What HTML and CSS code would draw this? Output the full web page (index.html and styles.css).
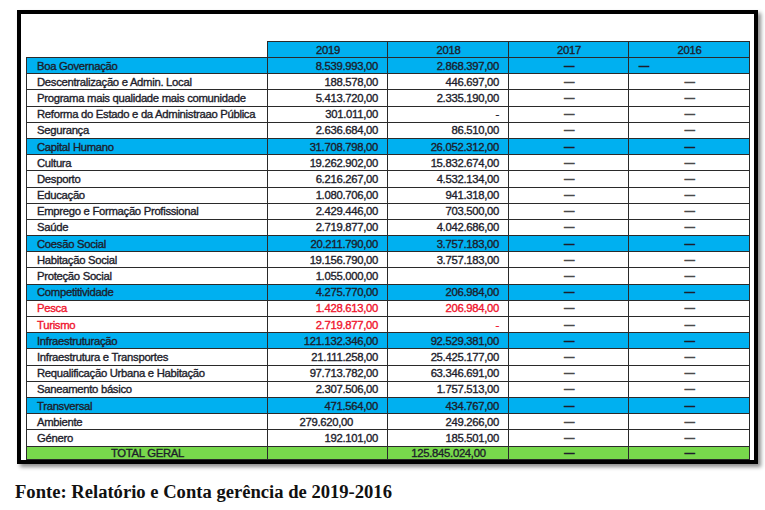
FILE: index.html
```html
<!DOCTYPE html>
<html lang="pt">
<head>
<meta charset="utf-8">
<title>Orçamento por pilar</title>
<link rel="stylesheet" href="styles.css">
</head>
<body>
<div class="frame">
  <table class="budget">
    <colgroup>
      <col class="c-label"><col class="c-num"><col class="c-num2"><col class="c-num"><col class="c-num2">
    </colgroup>
    <thead>
      <tr class="head">
        <th class="blank"></th><th>2019</th><th>2018</th><th>2017</th><th>2016</th>
      </tr>
    </thead>
    <tbody>
      <tr class="grp"><td>Boa Governação</td><td class="n">8.539.993,00</td><td class="n">2.868.397,00</td><td class="d">—</td><td class="d left">—</td></tr>
      <tr><td>Descentralização e Admin. Local</td><td class="n">188.578,00</td><td class="n">446.697,00</td><td class="d">—</td><td class="d">—</td></tr>
      <tr><td>Programa mais qualidade mais comunidade</td><td class="n">5.413.720,00</td><td class="n">2.335.190,00</td><td class="d">—</td><td class="d">—</td></tr>
      <tr><td>Reforma do Estado e da Administraao Pública</td><td class="n">301.011,00</td><td class="n">-</td><td class="d">—</td><td class="d">—</td></tr>
      <tr><td>Segurança</td><td class="n">2.636.684,00</td><td class="n">86.510,00</td><td class="d">—</td><td class="d">—</td></tr>
      <tr class="grp"><td>Capital Humano</td><td class="n">31.708.798,00</td><td class="n">26.052.312,00</td><td class="d">—</td><td class="d">—</td></tr>
      <tr><td>Cultura</td><td class="n">19.262.902,00</td><td class="n">15.832.674,00</td><td class="d">—</td><td class="d">—</td></tr>
      <tr><td>Desporto</td><td class="n">6.216.267,00</td><td class="n">4.532.134,00</td><td class="d">—</td><td class="d">—</td></tr>
      <tr><td>Educação</td><td class="n">1.080.706,00</td><td class="n">941.318,00</td><td class="d">—</td><td class="d">—</td></tr>
      <tr><td>Emprego e Formação Profissional</td><td class="n">2.429.446,00</td><td class="n">703.500,00</td><td class="d">—</td><td class="d">—</td></tr>
      <tr><td>Saúde</td><td class="n">2.719.877,00</td><td class="n">4.042.686,00</td><td class="d">—</td><td class="d">—</td></tr>
      <tr class="grp"><td>Coesão Social</td><td class="n">20.211.790,00</td><td class="n">3.757.183,00</td><td class="d">—</td><td class="d">—</td></tr>
      <tr><td>Habitação Social</td><td class="n">19.156.790,00</td><td class="n">3.757.183,00</td><td class="d">—</td><td class="d">—</td></tr>
      <tr><td>Proteção Social</td><td class="n">1.055.000,00</td><td class="n"></td><td class="d">—</td><td class="d">—</td></tr>
      <tr class="grp"><td>Competitividade</td><td class="n">4.275.770,00</td><td class="n">206.984,00</td><td class="d">—</td><td class="d">—</td></tr>
      <tr class="red"><td>Pesca</td><td class="n">1.428.613,00</td><td class="n">206.984,00</td><td class="d">—</td><td class="d">—</td></tr>
      <tr class="red"><td>Turismo</td><td class="n">2.719.877,00</td><td class="n">-</td><td class="d">—</td><td class="d">—</td></tr>
      <tr class="grp"><td>Infraestruturação</td><td class="n">121.132.346,00</td><td class="n">92.529.381,00</td><td class="d">—</td><td class="d">—</td></tr>
      <tr><td>Infraestrutura e Transportes</td><td class="n">21.111.258,00</td><td class="n">25.425.177,00</td><td class="d">—</td><td class="d">—</td></tr>
      <tr><td>Requalificação Urbana e Habitação</td><td class="n">97.713.782,00</td><td class="n">63.346.691,00</td><td class="d">—</td><td class="d">—</td></tr>
      <tr><td>Saneamento básico</td><td class="n">2.307.506,00</td><td class="n">1.757.513,00</td><td class="d">—</td><td class="d">—</td></tr>
      <tr class="grp"><td>Transversal</td><td class="n">471.564,00</td><td class="n">434.767,00</td><td class="d">—</td><td class="d">—</td></tr>
      <tr><td>Ambiente</td><td class="n offset">279.620,00</td><td class="n">249.266,00</td><td class="d">—</td><td class="d">—</td></tr>
      <tr><td>Género</td><td class="n">192.101,00</td><td class="n">185.501,00</td><td class="d">—</td><td class="d">—</td></tr>
      <tr class="total"><td class="c">TOTAL GERAL</td><td></td><td class="c">125.845.024,00</td><td class="d">—</td><td class="d">—</td></tr>
    </tbody>
  </table>
</div>
<p class="source">Fonte: Relatório e Conta gerência de 2019-2016</p>
</body>
</html>
```
FILE: styles.css
```css
html, body {
  margin: 0;
  padding: 0;
  background: #ffffff;
}

.frame {
  margin: 10px 0 0 17px;
  width: 728px;
  border: 4px solid #000;
  padding: 27px 0 0 5px;
  box-shadow: 3px 3px 4px rgba(0, 0, 0, 0.45);
  background: #fff;
}

.budget {
  border-collapse: collapse;
  table-layout: fixed;
  width: 723px;
  font-family: "Liberation Sans", Arial, sans-serif;
  font-size: 11.3px;
  letter-spacing: -0.3px;
  -webkit-text-stroke: 0.35px currentColor;
  color: #1d1d2b;
}

.c-label { width: 241px; }
.c-num { width: 120px; }
.c-num2 { width: 121px; }

.budget th,
.budget td {
  border: 1px solid #2a2a2a;
  height: 16.2px;
  padding: 0 9px 0 10px;
  line-height: 14px;
  white-space: nowrap;
  overflow: hidden;
  box-sizing: border-box;
}

.budget tr.head th {
  background: #00b0f0;
  font-weight: normal;
  text-align: center;
  height: 16px;
}

.budget tr.head th.blank {
  background: transparent;
  border: none;
  border-bottom: 1px solid #2a2a2a;
}

.budget tr.grp td { background: #00b0f0; }

.budget tr.red td { color: #f0142d; }
.budget tr.red td.d { color: #4a4a4a; }

.budget tr.total td {
  background: #78d84c;
  height: 12px;
  line-height: 12px;
}

.budget td.n { text-align: right; }
.budget td.n.offset { padding-right: 34px; }
.budget td.c { text-align: center; }

.budget td.d {
  text-align: center;
  color: #4a4a4a;
  font-size: 10px;
  -webkit-text-stroke: 0.8px currentColor;
}
.budget tr.grp td.d,
.budget tr.total td.d { color: #1d1d2b; }
.budget td.d.left { text-align: left; }

.source {
  margin: 17px 0 0 15px;
  font-family: "Liberation Serif", serif;
  font-weight: bold;
  font-size: 18.6px;
  line-height: 21px;
  color: #111;
}
```
